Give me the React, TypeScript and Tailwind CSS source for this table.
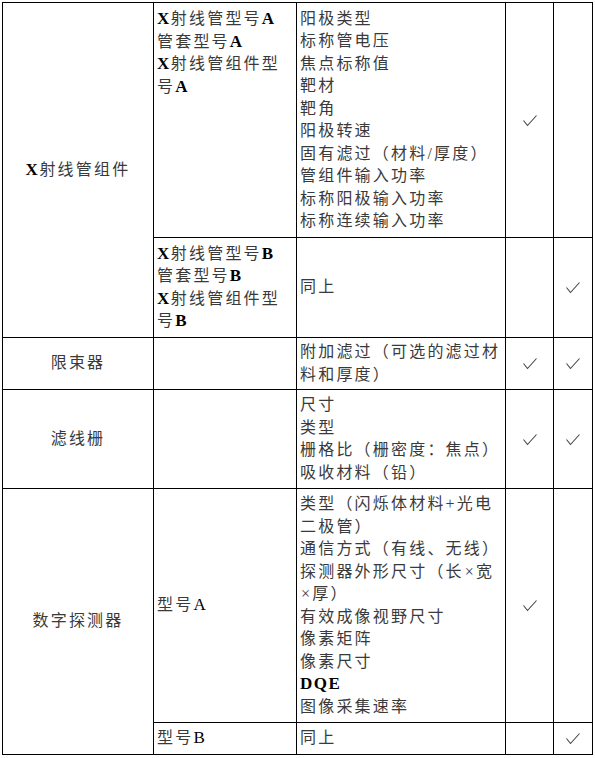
import React from 'react';

const Check = () => (
  <svg width="16" height="13" viewBox="0 0 16 13" className="mx-auto block">
    <path d="M1.5 6.5 L5.5 11.5 L14.5 1.5" fill="none" stroke="#444" strokeWidth="1.1" />
  </svg>
);

const L = ({ children }: { children: React.ReactNode }) => (
  <b className="font-bold text-black text-[17px] tracking-[1.5px]">{children}</b>
);
const R = ({ children }: { children: React.ReactNode }) => (
  <span className="text-black text-[17px] tracking-[1.5px]">{children}</span>
);
const X = () => <span className="pl-[1px]">×</span>;

function Lines({ lines }: { lines: React.ReactNode[] }) {
  return (
    <div>
      {lines.map((l, i) => (
        <div key={i} className="whitespace-nowrap">{l}</div>
      ))}
    </div>
  );
}

const cell = 'border border-black p-0 align-middle';
const textCell = 'border border-black pl-[3px] pr-0 py-0';

export default function App() {
  return (
    <div
      className="min-h-screen bg-white pl-[2px] pt-[2px] text-[16px] leading-[22.5px] tracking-[2.2px] text-[#3a3a3a]"
      style={{ fontFamily: '"Liberation Serif", "Noto Sans CJK SC", serif' }}
    >
      <table className="border-collapse table-fixed w-[590px]">
        <colgroup>
          <col className="w-[151px]" />
          <col className="w-[143px]" />
          <col className="w-[209px]" />
          <col className="w-[48px]" />
          <col className="w-[39px]" />
        </colgroup>
        <tbody>
          <tr className="h-[235px]">
            <td rowSpan={2} className={`${cell} text-center`}>
              <L>X</L>射线管组件
            </td>
            <td className={`${textCell} align-top pt-[5px]`}>
              <Lines
                lines={[
                  <><L>X</L>射线管型号<L>A</L></>,
                  <>管套型号<L>A</L></>,
                  <><L>X</L>射线管组件型</>,
                  <>号<L>A</L></>,
                ]}
              />
            </td>
            <td className={`${textCell} align-middle`}>
              <Lines
                lines={[
                  '阳极类型',
                  '标称管电压',
                  '焦点标称值',
                  '靶材',
                  '靶角',
                  '阳极转速',
                  '固有滤过（材料/厚度）',
                  '管组件输入功率',
                  '标称阳极输入功率',
                  '标称连续输入功率',
                ]}
              />
            </td>
            <td className={cell}><Check /></td>
            <td className={cell}></td>
          </tr>
          <tr className="h-[100px]">
            <td className={`${textCell} align-middle`}>
              <Lines
                lines={[
                  <><L>X</L>射线管型号<L>B</L></>,
                  <>管套型号<L>B</L></>,
                  <><L>X</L>射线管组件型</>,
                  <>号<L>B</L></>,
                ]}
              />
            </td>
            <td className={`${textCell} align-middle`}>同上</td>
            <td className={cell}></td>
            <td className={cell}><Check /></td>
          </tr>
          <tr className="h-[52px]">
            <td className={`${cell} text-center`}>限束器</td>
            <td className={cell}></td>
            <td className={`${textCell} align-middle`}>
              <Lines lines={['附加滤过（可选的滤过材', '料和厚度）']} />
            </td>
            <td className={cell}><Check /></td>
            <td className={cell}><Check /></td>
          </tr>
          <tr className="h-[99px]">
            <td className={`${cell} text-center`}>滤线栅</td>
            <td className={cell}></td>
            <td className={`${textCell} align-middle`}>
              <Lines lines={['尺寸', '类型', '栅格比（栅密度：焦点）', '吸收材料（铅）']} />
            </td>
            <td className={cell}><Check /></td>
            <td className={cell}><Check /></td>
          </tr>
          <tr className="h-[234px]">
            <td rowSpan={2} className={`${cell} text-center`}>数字探测器</td>
            <td className={`${textCell} align-middle`}>型号<R>A</R></td>
            <td className={`${textCell} align-middle`}>
              <Lines
                lines={[
                  '类型（闪烁体材料+光电',
                  '二极管）',
                  '通信方式（有线、无线）',
                  <>探测器外形尺寸（长<X />宽</>,
                  <><X />厚）</>,
                  '有效成像视野尺寸',
                  '像素矩阵',
                  '像素尺寸',
                  <L>DQE</L>,
                  '图像采集速率',
                ]}
              />
            </td>
            <td className={cell}><Check /></td>
            <td className={cell}></td>
          </tr>
          <tr className="h-[32px]">
            <td className={`${textCell} align-middle`}>型号<R>B</R></td>
            <td className={`${textCell} align-middle`}>同上</td>
            <td className={cell}></td>
            <td className={cell}><Check /></td>
          </tr>
        </tbody>
      </table>
    </div>
  );
}
